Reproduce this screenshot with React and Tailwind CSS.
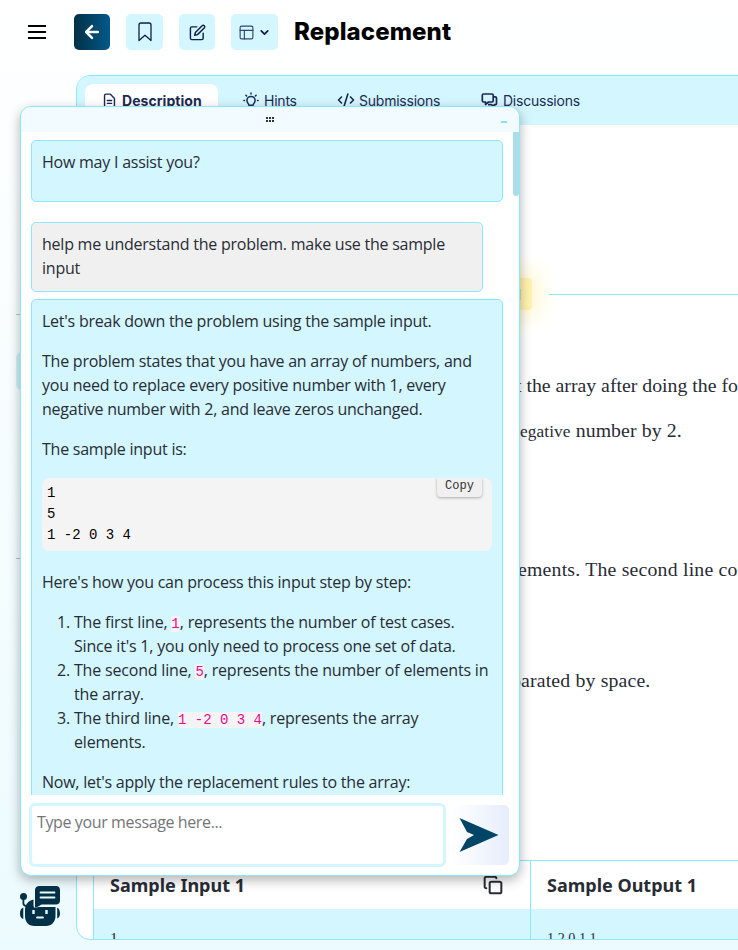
import { HiOutlineDocumentText } from "react-icons/hi";
import { FiEdit } from "react-icons/fi";
import { PanelsTopLeft, ChevronDown, CodeXml, Copy, ArrowLeft } from "lucide-react";

function BookmarkIcon() {
  return (
    <svg width="14" height="20" viewBox="0 0 14 20" fill="none" stroke="currentColor" strokeWidth="1.3" strokeLinejoin="round">
      <path d="M1 18.500V3a2 2 0 0 1 2-2h8a2 2 0 0 1 2 2v15.500L7 13.200z" />
    </svg>
  );
}

function BulbIcon() {
  return (
    <svg width="16" height="18" viewBox="0 0 16 18" fill="none" stroke="currentColor" strokeWidth="1.500" strokeLinecap="round">
      <path d="M6 14.200C6 13 3.900 11.800 3.900 9.500a4.100 4.100 0 0 1 8.200 0c0 2.300-2.100 3.500-2.100 4.700z" />
      <path d="M6.300 16.500h3.400M8 2v1M.9 9.400h.6M14.500 9.400h.6M2.900 4.300l.6.600M13.100 4.300l-.6.600" />
    </svg>
  );
}

function ForumIcon() {
  return (
    <svg width="17" height="17" viewBox="0 0 17 17" fill="none" stroke="currentColor" strokeWidth="1.700" strokeLinejoin="round">
      <path d="M2.500 2h8.500a1.200 1.200 0 0 1 1.200 1.200v5.600A1.200 1.200 0 0 1 11 10H7.500L4.500 12.500V10h-2a1.200 1.200 0 0 1-1.200-1.200V3.200A1.200 1.200 0 0 1 2.500 2z" />
      <path d="M12.500 4.800h1.800a1.200 1.200 0 0 1 1.200 1.200v5.500a1.200 1.200 0 0 1-1.200 1.200h-1v2.300l-2.800-2.300H7" />
    </svg>
  );
}

function RobotIcon() {
  return (
    <svg width="42" height="42" viewBox="0 0 42 42" fill="#023047">
      <path d="M6 25c0-5 2.500-9 8.500-10.500v5.500c0 3 2 4 4.500 2L36.500 22v9c0 6-4 10-9.500 10H15.500C9.500 41 6 37 6 31z" />
      <circle cx="4.500" cy="11.500" r="3.500" />
      <path d="M3.500 13v5.500c0 2 1.500 3 3.500 3.200l1-1.700c-1.800 0-2.700-.5-2.700-2V13z" />
      <path d="M20.500 1H37c2.500 0 4 1.500 4 4v10.500c0 2.500-1.500 4-4 4H22.500L17.500 22.500c-1 .6-1.500 0-1.500-1V5c0-2.500 2-4 4.500-4z" />
      <path d="M4.300 22.500v11.500C1.800 33 1 31.500 1 28.500s.8-5 3.300-6zM38.200 22.500v11c2-1 2.800-2.500 2.800-5s-.8-5-2.800-6z" />
      <path d="M21.500 7.500h14M21.500 12.500h14M18 32.500h6" stroke="#ecfbff" strokeWidth="1.800" strokeLinecap="round" />
      <path d="M14.500 25v4M27.500 25v4" stroke="#ecfbff" strokeWidth="2.400" />
    </svg>
  );
}

function Header() {
  return (
    <header className="flex h-[64px] shrink-0 items-center pl-[28px] text-[#0f1f4b]">
      <div className="flex w-[18px] flex-col gap-[4px]">
        <div className="h-[2px] bg-black" />
        <div className="h-[2px] bg-black" />
        <div className="h-[2px] bg-black" />
      </div>
      <button className="ml-[28px] flex h-9 w-9 items-center justify-center rounded-[5px] bg-gradient-to-r from-[#023047] to-[#005a8a] text-white">
        <ArrowLeft size={20} strokeWidth={3} />
      </button>
      <button className="ml-4 flex h-9 w-[37px] items-center justify-center rounded-[5px] bg-[#d3f6ff]">
        <BookmarkIcon />
      </button>
      <button className="ml-4 flex h-9 w-9 items-center justify-center rounded-[5px] bg-[#d3f6ff]">
        <FiEdit size={17} />
      </button>
      <button className="ml-4 flex h-9 w-[47px] items-center justify-center gap-[3px] rounded-[5px] bg-[#d3f6ff]">
        <PanelsTopLeft size={17} strokeWidth={1.6} className="text-[#33456f]" />
        <ChevronDown size={13} strokeWidth={3.2} />
      </button>
      <h1 className="ml-[16px] font-['Inter',sans-serif] text-[24px] font-extrabold tracking-[0.1px] whitespace-nowrap text-black">
        Replacement
      </h1>
    </header>
  );
}

function Tabs() {
  return (
    <nav className="flex h-[49px] shrink-0 bg-[#d3f6ff] pt-2 pl-2 font-['Inter',sans-serif] text-[14px] tracking-[-0.23px] whitespace-nowrap text-[#1c2a55]">
      <div className="flex h-8 w-[133px] items-center rounded-lg bg-white pl-4 font-bold tracking-[0.05px]">
        <HiOutlineDocumentText size={17} className="mr-1" />
        Description
      </div>
      <div className="flex h-8 w-[94px] items-center pl-[25px]">
        <BulbIcon />
        <span className="ml-[5px]">Hints</span>
      </div>
      <div className="flex h-8 w-[145px] items-center pl-[25px]">
        <CodeXml size={18} strokeWidth={2.2} />
        <span className="ml-1">Submissions</span>
      </div>
      <div className="flex h-8 items-center pl-[24px]">
        <ForumIcon />
        <span className="ml-[5px]">Discussions</span>
      </div>
    </nav>
  );
}

function Samples() {
  return (
    <div className="ml-[16px] grid grid-cols-[437px_1fr] border-t border-l border-[#8be8fd]">
      <div className="border-r border-[#8be8fd]">
        <div className="flex h-12 items-center justify-between bg-white pr-[27px] pl-4 font-['Noto_Sans',sans-serif] text-[18px] font-bold">
          Sample Input 1
          <Copy size={20} strokeWidth={2.4} />
        </div>
        <div className="h-[80px] bg-[#d3f6ff] pt-[19px] pl-4 text-[15.5px] leading-5">1</div>
      </div>
      <div>
        <div className="flex h-12 items-center bg-white pl-4 font-['Noto_Sans',sans-serif] text-[18px] font-bold whitespace-nowrap">
          Sample Output 1
        </div>
        <div className="h-[80px] bg-[#d3f6ff] pt-[19px] pl-4 text-[14.200px] leading-5">1 2 0 1 1</div>
      </div>
    </div>
  );
}

function Problem() {
  return (
    <main className="ml-[76px] mt-[11px] flex h-[865px] w-[700px] shrink-0 flex-col overflow-hidden rounded-l-[14px] border border-[#8be8fd] bg-white font-['Liberation_Serif',serif] text-[19.8px] text-[#282c35]">
      <Tabs />
      <div className="mt-[153px] flex h-8 shrink-0 items-center">
        <div className="ml-[355px] flex h-8 w-[100px] items-center justify-end rounded-[4px] bg-[#fff1ae] pr-[11px] font-['Open_Sans',sans-serif] text-[14px] shadow-[0_0_20px_8px_#fff8d0]">
          Solved
        </div>
        <div className="ml-[17px] h-px flex-1 bg-[#8be8fd]" />
      </div>
      <p className="mt-[63px] h-6 shrink-0 pl-[439px] leading-6 whitespace-nowrap">
        t the array after doing the fo
      </p>
      <p className="mt-[21px] h-6 shrink-0 pl-[443px] leading-6 tracking-[0.1px] whitespace-nowrap">
        <span className="text-[17.3px]">egative</span> number by 2.
      </p>
      <p className="mt-[115px] h-6 shrink-0 pl-[441px] leading-6 tracking-[0.2px] whitespace-nowrap">
        ements. The second line con
      </p>
      <p className="mt-[87px] h-6 shrink-0 pl-[434px] leading-6 tracking-[0.16px] whitespace-nowrap">parated by space.</p>
      <div className="mt-[168px] shrink-0">
        <Samples />
      </div>
    </main>
  );
}

function Mono({ children }) {
  return (
    <code className="bg-[#f4f4f4] font-['Liberation_Mono',monospace] text-[14px] leading-none tracking-normal text-[#e80c8c]">
      {children}
    </code>
  );
}

function Messages() {
  return (
    <div className="flex h-[663px] justify-between overflow-hidden bg-white pl-[10px]">
      <div className="w-[472px] pt-2 text-[#282c35]">
        <div className="h-[62px] rounded-[5px] border border-[#8be8fd] bg-[#d3f6ff] px-[10px] pt-[9px]">
          How may I assist you?
        </div>
        <div className="mt-5 h-[70px] w-[452px] rounded-[5px] border border-[#8be8fd] bg-[#f0f0f0] px-[10px] pt-[9px] whitespace-nowrap">
          help me understand the problem. make use the sample
          <br />
          input
        </div>
        <div className="mt-[7px] h-[600px] rounded-[5px] border border-[#8be8fd] bg-[#d3f6ff] px-[10px] pt-[9px] whitespace-nowrap">
          <p className="mb-4">Let's break down the problem using the sample input.</p>
          <p className="mb-4">
            The problem states that you have an array of numbers, and
            <br />
            you need to replace every positive number with 1, every
            <br />
            negative number with 2, and leave zeros unchanged.
          </p>
          <p className="mb-[17px]">The sample input is:</p>
          <div className="mb-[19px] flex h-[73px] justify-between overflow-hidden rounded-[7px] bg-[#f4f4f4] pr-[10px] pl-[5px]">
            <pre className="pt-[5px] font-['Liberation_Mono',monospace] text-[14px] leading-[21px] tracking-normal text-black">
              {"1\n5\n1 -2 0 3 4"}
            </pre>
            <button className="h-[19px] w-[45px] rounded-b-[4px] bg-[#f0f0f0] pb-[3px] font-['Liberation_Mono',monospace] text-[12px] leading-4 tracking-normal text-[#333] shadow-[0_1px_3px_rgba(0,0,0,0.3)]">
              Copy
            </button>
          </div>
          <p className="mb-4">Here's how you can process this input step by step:</p>
          <ol className="mb-4 list-decimal pl-8 tracking-[-0.19px]">
            <li>
              The first line, <Mono>1</Mono>, represents the number of test cases.
              <br />
              Since it's 1, you only need to process one set of data.
            </li>
            <li>
              The second line, <Mono>5</Mono>, represents the number of elements in
              <br />
              the array.
            </li>
            <li>
              The third line, <Mono>1 -2 0 3 4</Mono>, represents the array
              <br />
              elements.
            </li>
          </ol>
          <p>Now, let's apply the replacement rules to the array:</p>
        </div>
      </div>
      <div className="h-16 w-[6px] rounded-b-[3px] bg-[#addde8]" />
    </div>
  );
}

function Chat() {
  return (
    <section className="absolute top-[106px] left-[20px] flex h-[770px] w-[500px] flex-col overflow-hidden rounded-[11px] border border-[#8be8fd] bg-white font-['Open_Sans',sans-serif] text-[16px] leading-6 tracking-[-0.235px] shadow-[0_4px_12px_rgba(0,0,0,0.3)]">
      <div className="flex h-[25px] shrink-0 items-center justify-between bg-[#f2fbff] pr-[12px] pl-[245px]">
        <div className="grid grid-cols-3 gap-[1px]">
          {[0, 1, 2, 3, 4, 5].map((dot) => (
            <div key={dot} className="h-[2px] w-[2px] bg-[#333]" />
          ))}
        </div>
        <div className="mt-[5px] h-[2px] w-[6px] bg-[#8be0f0]" />
      </div>
      <Messages />
      <div className="flex pt-2 pl-2">
        <div className="h-16 w-[417px] rounded-[6px] border-[3px] border-[#d3f6ff] bg-white pt-[4px] pl-[5px] tracking-[-0.38px] text-[#757575]">
          Type your message here...
        </div>
        <button className="mt-[2px] ml-[6px] flex h-[60px] w-[57px] items-center rounded-[5px] bg-gradient-to-r from-white to-[#e6edfc] pl-[6px]">
          <svg width="41" height="34" viewBox="0 0 41 34" fill="#004566">
            <path d="M1.500 0 40.500 17 1.500 34l7.500-13L16 17 9 14z" />
          </svg>
        </button>
      </div>
    </section>
  );
}

export default function App() {
  return (
    <div className="relative flex h-[950px] w-[738px] flex-col overflow-hidden bg-gradient-to-b from-white via-[#f6fdff] to-[#ecfbff]">
      <Header />
      <Problem />
      <div className="absolute top-[314px] left-[16px] h-px w-8 bg-[#b8c3c8]" />
      <div className="absolute top-[352px] left-[16px] h-[38px] w-9 rounded-[6px] bg-[#cdf3fb]" />
      <div className="absolute top-[558px] left-[16px] h-px w-8 bg-[#b8c3c8]" />
      <Chat />
      <div className="absolute top-[885px] left-[19px]">
        <RobotIcon />
      </div>
    </div>
  );
}
